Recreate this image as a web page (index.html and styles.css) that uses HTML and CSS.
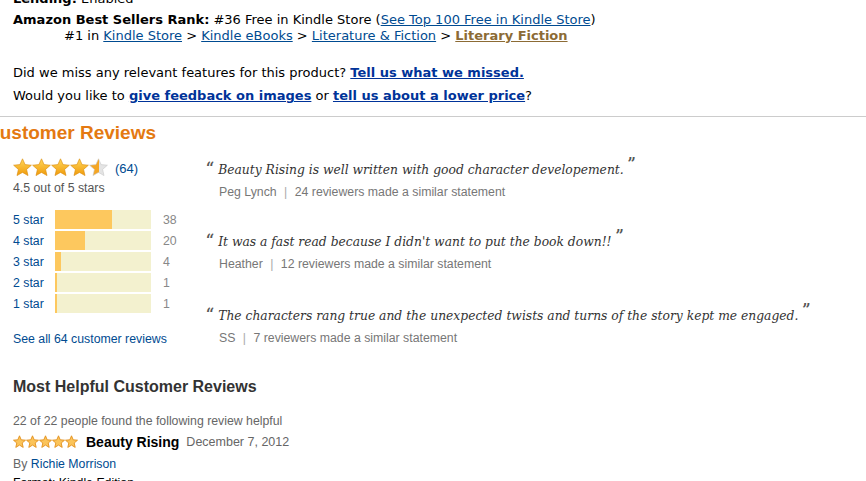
FILE: index.html
```html
<!DOCTYPE html>
<html lang="en">
<head>
    <meta charset="UTF-8">
    <title>Customer Reviews</title>
    <link rel="stylesheet" href="styles.css">
</head>
<body>

<ul class="details">
    <li><b>Lending:</b> Enabled</li>
    <li class="rank">
        <b>Amazon Best Sellers Rank:</b> #36 Free in Kindle Store (<a href="#">See Top 100 Free in Kindle Store</a>)
        <div class="rank-path">#1 in <a href="#">Kindle Store</a> &gt; <a href="#">Kindle eBooks</a> &gt; <a href="#">Literature &amp; Fiction</a> &gt; <a href="#" class="current">Literary Fiction</a></div>
    </li>
</ul>

<div class="feedback">
    <p>Did we miss any relevant features for this product? <a href="#">Tell us what we missed.</a></p>
    <p>Would you like to <a href="#">give feedback on images</a> or <a href="#">tell us about a lower price</a>?</p>
</div>

<hr class="divider">

<h2 class="reviews-title">Customer Reviews</h2>

<div class="summary">
    <div class="histogram">
        <div class="avg">
            <svg class="stars" width="96" height="19" viewBox="0 0 96 19">
                <defs>
                    <linearGradient id="gold" x1="0" y1="0" x2="0" y2="1">
                        <stop offset="0" stop-color="#ffd75a"/>
                        <stop offset="1" stop-color="#f09a0a"/>
                    </linearGradient>
                    <linearGradient id="half" x1="0" y1="0" x2="1" y2="0">
                        <stop offset="0.5" stop-color="#f5a623"/>
                        <stop offset="0.5" stop-color="#e4e4e4"/>
                    </linearGradient>
                    <path id="star" d="M9.5 0.8 L12.1 6.6 L18.4 7.2 L13.6 11.4 L15 17.6 L9.5 14.4 L4 17.6 L5.4 11.4 L0.6 7.2 L6.9 6.6 Z"/>
                </defs>
                <use href="#star" x="0" fill="url(#gold)" stroke="#d98a0c" stroke-width="0.6"/>
                <use href="#star" x="19" fill="url(#gold)" stroke="#d98a0c" stroke-width="0.6"/>
                <use href="#star" x="38" fill="url(#gold)" stroke="#d98a0c" stroke-width="0.6"/>
                <use href="#star" x="57" fill="url(#gold)" stroke="#d98a0c" stroke-width="0.6"/>
                <use href="#star" x="76" fill="url(#half)" stroke="#c8c8c8" stroke-width="0.6"/>
            </svg>
            <a href="#" class="count">(64)</a>
        </div>
        <div class="avg-text">4.5 out of 5 stars</div>

        <div class="bars">
            <div class="bar-row"><a href="#">5 star</a><span class="bar"><span class="fill" style="width: 59.4%"></span></span><span class="num">38</span></div>
            <div class="bar-row"><a href="#">4 star</a><span class="bar"><span class="fill" style="width: 31.3%"></span></span><span class="num">20</span></div>
            <div class="bar-row"><a href="#">3 star</a><span class="bar"><span class="fill" style="width: 6.3%"></span></span><span class="num">4</span></div>
            <div class="bar-row"><a href="#">2 star</a><span class="bar"><span class="fill" style="width: 2%"></span></span><span class="num">1</span></div>
            <div class="bar-row"><a href="#">1 star</a><span class="bar"><span class="fill" style="width: 2%"></span></span><span class="num">1</span></div>
        </div>

        <a href="#" class="see-all">See all 64 customer reviews</a>
    </div>

    <div class="quotes">
        <div class="quote">
            <p class="quote-text"><span class="q">&ldquo;</span> Beauty Rising is well written with good character developement. <span class="q close">&rdquo;</span></p>
            <p class="quote-by">Peg Lynch <span class="sep">|</span> 24 reviewers made a similar statement</p>
        </div>
        <div class="quote">
            <p class="quote-text"><span class="q">&ldquo;</span> It was a fast read because I didn't want to put the book down!! <span class="q close">&rdquo;</span></p>
            <p class="quote-by">Heather <span class="sep">|</span> 12 reviewers made a similar statement</p>
        </div>
        <div class="quote">
            <p class="quote-text"><span class="q">&ldquo;</span> The characters rang true and the unexpected twists and turns of the story kept me engaged. <span class="q close">&rdquo;</span></p>
            <p class="quote-by">SS <span class="sep">|</span> 7 reviewers made a similar statement</p>
        </div>
    </div>
</div>

<div class="helpful">
    <h3>Most Helpful Customer Reviews</h3>
    <div class="review">
        <div class="helpful-count">22 of 22 people found the following review helpful</div>
        <div class="review-head">
            <svg class="small-stars" width="66" height="14" viewBox="0 0 66 14">
                <defs>
                    <path id="sstar" d="M6.5 0.8 L8.2 4.8 L12.5 5.2 L9.2 8 L10.2 12.4 L6.5 10.1 L2.8 12.4 L3.8 8 L0.5 5.2 L4.8 4.8 Z"/>
                </defs>
                <use href="#sstar" x="0" fill="#fbc45a" stroke="#e2901c" stroke-width="0.9"/>
                <use href="#sstar" x="13" fill="#fbc45a" stroke="#e2901c" stroke-width="0.9"/>
                <use href="#sstar" x="26" fill="#fbc45a" stroke="#e2901c" stroke-width="0.9"/>
                <use href="#sstar" x="39" fill="#fbc45a" stroke="#e2901c" stroke-width="0.9"/>
                <use href="#sstar" x="52" fill="#fbc45a" stroke="#e2901c" stroke-width="0.9"/>
            </svg>
            <b class="review-title">Beauty Rising</b>
            <span class="review-date">December 7, 2012</span>
        </div>
        <div class="review-by">By <a href="#">Richie Morrison</a></div>
        <div class="review-format">Format: Kindle Edition</div>
    </div>
</div>

</body>
</html>
```

FILE: styles.css
```css
body {
    margin: 0;
    padding: 0;
    background: #fff;
    color: #000;
    font-family: "DejaVu Sans", Verdana, sans-serif;
    font-size: 13px;
    overflow: hidden;
}
a {
    color: #004b91;
}
.details {
    list-style: none;
    margin: -9px 0 0 0;
    padding: 0 0 0 13px;
}
.details li {
    line-height: 16px;
    margin-bottom: 5px;
}
.rank-path {
    padding-left: 51px;
}
.rank-path a.current {
    color: #8c6b35;
    font-weight: bold;
}
.feedback {
    padding: 12px 0 0 13px;
}
.feedback p {
    margin: 0;
    line-height: 23px;
}
.feedback a {
    color: #003399;
    font-weight: bold;
}
.divider {
    border: 0;
    border-top: 1px solid #ccc;
    margin: 9px 0 0 0;
}
.reviews-title {
    font-family: Arial, "Liberation Sans", sans-serif;
    font-size: 19px;
    font-weight: bold;
    color: #e47911;
    margin: 6px 0 0 -14px;
    line-height: 20px;
}

.summary {
    display: flex;
    font-family: Arial, "Liberation Sans", sans-serif;
    margin-top: 14px;
}
.histogram {
    width: 193px;
    padding-left: 13px;
    font-size: 12.3px;
}
.avg {
    display: flex;
    align-items: center;
    gap: 6px;
    height: 21px;
}
.avg .count {
    text-decoration: none;
    font-size: 13px;
    margin-top: 2px;
}
.avg-text {
    color: #555;
    line-height: 14px;
    margin-top: 3px;
}
.bars {
    margin-top: 15px;
}
.bar-row {
    display: flex;
    align-items: center;
    height: 19px;
    margin-bottom: 2px;
}
.bar-row a {
    width: 42px;
    text-decoration: none;
    color: #004b91;
}
.bar {
    width: 96px;
    height: 19px;
    background: #f3f1cf;
}
.fill {
    display: block;
    height: 100%;
    background: #fdc85e;
}
.num {
    margin-left: 12px;
    color: #888;
}
.see-all {
    display: block;
    margin-top: 19px;
    text-decoration: none;
    color: #004b91;
}

.quotes {
    padding-top: 3px;
}
.quote {
    height: 72px;
}
.quote:nth-child(2) {
    height: 74px;
}
.quote:last-child {
    height: auto;
}
.quote p {
    margin: 0;
}
.quote-text {
    font-family: "DejaVu Serif", Georgia, serif;
    font-stretch: condensed;
    font-style: italic;
    font-size: 13.7px;
    color: #333;
    line-height: 18px;
}
.q {
    font-family: "DejaVu Serif", Georgia, serif;
    font-style: normal;
    font-weight: bold;
    color: #555;
    font-size: 16px;
}
.q.close {
    position: relative;
    top: -5px;
}
.quote-by {
    padding-left: 13px;
    margin-top: 7px !important;
    font-size: 12.3px;
    color: #777;
}
.sep {
    margin: 0 4px;
    color: #aaa;
}

.helpful {
    padding-left: 13px;
    font-family: Arial, "Liberation Sans", sans-serif;
}
.helpful h3 {
    font-size: 16px;
    color: #333;
    margin: 31px 0 0 0;
    line-height: 20px;
}
.helpful-count {
    margin-top: 17px;
    font-size: 12.3px;
    color: #666;
}
.review-head {
    display: flex;
    align-items: center;
    gap: 7px;
    margin-top: 6px;
}
.review-title {
    font-size: 14px;
    color: #000;
}
.review-date {
    font-size: 12.5px;
    color: #666;
}
.review-by {
    margin-top: 7px;
    font-size: 12.3px;
    color: #666;
}
.review-by a {
    text-decoration: none;
}
.review-format {
    margin-top: 5px;
    font-size: 12.3px;
}
```
